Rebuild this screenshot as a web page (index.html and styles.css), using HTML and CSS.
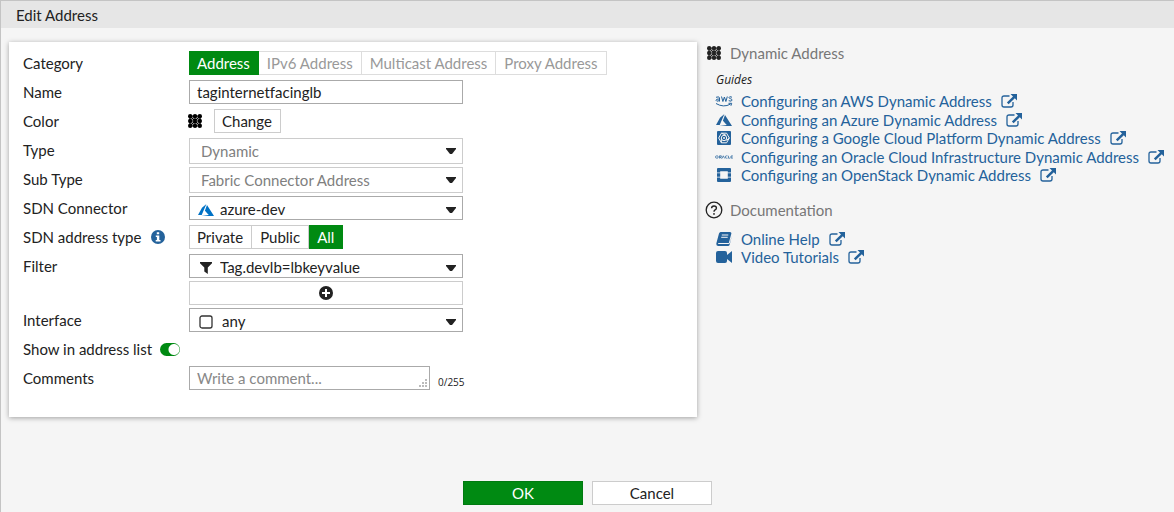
FILE: index.html
```html
<!DOCTYPE html>
<html lang="en">
<head>
<meta charset="utf-8">
<meta name="viewport" content="width=device-width, initial-scale=1">
<title>Edit Address</title>
<link rel="stylesheet" href="styles.css">
</head>
<body>
<svg class="sprite" aria-hidden="true">
  <symbol id="i-dots" viewBox="0 0 14 14">
    <path d="M2 2l10 10M12 2L2 12M7 2v10M2 7h10M2 2h10v10H2z" fill="none" stroke="currentColor" stroke-width="1.2"/>
    <g fill="currentColor"><circle cx="2.2" cy="2.2" r="2.2"/><circle cx="7" cy="2.2" r="2.2"/><circle cx="11.8" cy="2.2" r="2.2"/><circle cx="2.2" cy="7" r="2.2"/><circle cx="7" cy="7" r="1.6"/><circle cx="11.8" cy="7" r="2.2"/><circle cx="2.2" cy="11.8" r="2.2"/><circle cx="7" cy="11.8" r="2.2"/><circle cx="11.8" cy="11.8" r="2.2"/></g>
  </symbol>
  <symbol id="i-azure" viewBox="0 0 16 12">
    <path d="M8.4 0L4 3.8 0 11h3.7zM9 1L6.9 6.8l3.9 4.1L3.4 12H16z" fill="currentColor"/>
  </symbol>
  <symbol id="i-ext" viewBox="0 0 16 14">
    <path d="M8.5 2H3Q1 2 1 4v7q0 2 2 2h7q2 0 2-2V8" fill="none" stroke="currentColor" stroke-width="1.3"/>
    <path d="M9.5 0H16v6.5l-2.2-2.2L7.6 10.200 5.900 8.500l6.100-6.100z" fill="currentColor"/>
  </symbol>
</svg>
<div class="page">
  <header class="titlebar"><h1>Edit Address</h1></header>
  <main class="content">
    <form class="card" id="address-form">
      <div class="row">
        <span class="label" id="l-category">Category</span>
        <div class="segments" role="radiogroup" aria-labelledby="l-category">
          <label class="segment"><input type="radio" name="category" checked>Address</label>
          <label class="segment"><input type="radio" name="category" disabled>IPv6 Address</label>
          <label class="segment"><input type="radio" name="category" disabled>Multicast Address</label>
          <label class="segment"><input type="radio" name="category" disabled>Proxy Address</label>
        </div>
      </div>
      <div class="row">
        <label class="label" for="name">Name</label>
        <input class="text-input" id="name" type="text" value="taginternetfacinglb">
      </div>
      <div class="row">
        <span class="label">Color</span>
        <div class="color-field">
          <svg class="icon-dots black"><use href="#i-dots"/></svg>
          <button class="button change" type="button">Change</button>
        </div>
      </div>
      <div class="row">
        <label class="label" for="type">Type</label>
        <div class="select tall"><select id="type" disabled><option>Dynamic</option></select><svg class="caret" viewBox="0 0 10 6"><path d="M0 0h10v1L6 6H4L0 1z"/></svg></div>
      </div>
      <div class="row">
        <label class="label" for="subtype">Sub Type</label>
        <div class="select tall"><select id="subtype" disabled><option>Fabric Connector Address</option></select><svg class="caret" viewBox="0 0 10 6"><path d="M0 0h10v1L6 6H4L0 1z"/></svg></div>
      </div>
      <div class="row">
        <label class="label" for="sdn">SDN Connector</label>
        <div class="select"><svg class="lead azure"><use href="#i-azure"/></svg><select class="with-icon" id="sdn"><option>azure-dev</option></select><svg class="caret" viewBox="0 0 10 6"><path d="M0 0h10v1L6 6H4L0 1z"/></svg></div>
      </div>
      <div class="row">
        <span class="label with-info"><span id="l-sdntype">SDN address type</span>
          <svg class="info" viewBox="0 0 14 14"><circle cx="7" cy="7" r="7"/><path d="M5.800 2.300h2.400v2H5.800zM4.800 5.400h3.500v4.700h1.200v1.500H4.700v-1.500h1.200V6.900H4.800z" fill="#fff"/></svg>
        </span>
        <div class="segments" role="radiogroup" aria-labelledby="l-sdntype">
          <label class="segment"><input type="radio" name="sdntype">Private</label>
          <label class="segment"><input type="radio" name="sdntype">Public</label>
          <label class="segment"><input type="radio" name="sdntype" checked>All</label>
        </div>
      </div>
      <div class="row">
        <label class="label" for="filter">Filter</label>
        <div class="stack">
          <div class="select"><svg class="lead" viewBox="0 0 16 12"><path d="M2 0h12v1.200L9.800 5.500V12L6.300 9.500v-4L2 1.200z" fill="#222"/></svg><select class="with-icon" id="filter"><option>Tag.devlb=lbkeyvalue</option></select><svg class="caret" viewBox="0 0 10 6"><path d="M0 0h10v1L6 6H4L0 1z"/></svg></div>
          <button class="button add" type="button" aria-label="Add filter"><svg viewBox="0 0 14 14"><circle cx="7" cy="7" r="7" fill="#222"/><path d="M7 3v8M3 7h8" stroke="#fff" stroke-width="2"/></svg></button>
        </div>
      </div>
      <div class="row">
        <label class="label" for="interface">Interface</label>
        <div class="select"><svg class="lead square" viewBox="0 0 14 14"><rect x="1" y="1" width="12" height="12" rx="2" fill="none" stroke="#333" stroke-width="1.300"/></svg><select class="with-icon wide" id="interface"><option>any</option></select><svg class="caret" viewBox="0 0 10 6"><path d="M0 0h10v1L6 6H4L0 1z"/></svg></div>
      </div>
      <div class="row single">
        <label class="label" for="show">Show in address list</label>
        <input class="toggle" id="show" type="checkbox" checked>
      </div>
      <div class="row">
        <label class="label" for="comments">Comments</label>
        <div class="comment-field">
          <div class="comment-box">
            <textarea id="comments" rows="1" maxlength="255" placeholder="Write a comment..."></textarea>
            <svg class="grip" viewBox="0 0 8 8"><path d="M6 0h2v2H6zM3 3h2v2H3zM6 3h2v2H6zM0 6h2v2H0zM3 6h2v2H3zM6 6h2v2H6z" fill="#bbb"/></svg>
          </div>
          <span class="counter">0/255</span>
        </div>
      </div>
    </form>
    <aside class="help">
      <h2><svg class="icon-dots"><use href="#i-dots"/></svg>Dynamic Address</h2>
      <h3>Guides</h3>
      <ul class="links guides">
        <li><svg class="link-icon" viewBox="0 0 18 12"><g fill="none" stroke="currentColor" stroke-width="1"><path d="M1 2.300Q4.500 1 4.500 3v3.500M4.500 4Q1 3.700 1 5.300t3.500.3M6.500 1.500l1.400 5L9.400 2l1.500 4.500 1.400-5M17 2.200q-3-1.200-3 .3 0 .9 1.500 1.200t1.500 1.400q0 1.800-3.300.6"/><path d="M1 8.500q7.500 4.500 14.500.6M13.500 8.300h3.200l-.8 2.500"/></g></svg><a href="#">Configuring an AWS Dynamic Address<svg class="ext"><use href="#i-ext"/></svg></a></li>
        <li><svg class="link-icon azure-link"><use href="#i-azure"/></svg><a href="#">Configuring an Azure Dynamic Address<svg class="ext"><use href="#i-ext"/></svg></a></li>
        <li><svg class="link-icon" viewBox="0 0 14 14"><rect width="14" height="14" rx="1" fill="currentColor"/><g fill="none" stroke="#f5f5f5"><path d="M4.400 2.200h5.200L12.300 7l-2.700 4.800H4.400L1.700 7z"/><circle cx="7" cy="7" r="2.700"/><path d="M4.400 2.200l4.800 2.200M12.300 7l-3 2.400M4.400 11.800L4.300 7.500"/></g><circle cx="7" cy="7" r="1" fill="#f5f5f5"/></svg><a href="#">Configuring a Google Cloud Platform Dynamic Address<svg class="ext"><use href="#i-ext"/></svg></a></li>
        <li><svg class="link-icon" viewBox="0 0 18 4"><g fill="none" stroke="currentColor" stroke-width=".700"><rect x=".5" y=".8" width="2.800" height="2.400" rx="1.200"/><path d="M4.500 3.500V.8h1.800v1.400H4.800l1.800 1.200M7 3.500L8.300.8l1.400 2.700M12.500.8h-1q-1.200 0-1.200 1.200t1.200 1.200h1M13.500.8v2.400h1.800M17.800.8h-1.200q-.8 0-.8 1.200t.8 1.200h1.200M15.900 2h1.700"/></g></svg><a href="#">Configuring an Oracle Cloud Infrastructure Dynamic Address<svg class="ext"><use href="#i-ext"/></svg></a></li>
        <li><svg class="link-icon" viewBox="0 0 14 14"><path fill-rule="evenodd" d="M1 0h12q1 0 1 1v3.500h-3.200V3.300H3.200v1.200H0V1q0-1 1-1zM0 5.200h3.200v3.600H0zM10.800 5.200H14v3.600h-3.200zM0 9.500h3.200v1.200h7.600V9.500H14V13q0 1-1 1H1q-1 0-1-1z" fill="currentColor"/></svg><a href="#">Configuring an OpenStack Dynamic Address<svg class="ext"><use href="#i-ext"/></svg></a></li>
      </ul>
      <h2><svg class="question" viewBox="0 0 18 18"><circle cx="9" cy="9" r="7.800" fill="none" stroke="#222" stroke-width="1.300"/><path d="M6.600 7.200Q6.600 5 9 5t2.400 2q0 1.200-1.300 1.900Q9 9.500 9 10.800" fill="none" stroke="#222" stroke-width="1.400"/><circle cx="9" cy="12.900" r=".9" fill="#222"/></svg>Documentation</h2>
      <ul class="links docs">
        <li><svg class="link-icon" viewBox="0 0 16 14"><path d="M4.600 0H14q1.500.2 1.400 1.500L12.800 11H3q-1.200.2-1 1h10.500q1 0 1.300-1L16 3.500l-2.300 9q-.4 1.500-1.700 1.500H2Q0 13.800.3 11.500L3 1.500Q3.500.1 4.600 0z" fill="currentColor"/><path d="M5.800 3h6.500M5.200 5.300h6.500" stroke="#f5f5f5"/></svg><a href="#">Online Help<svg class="ext"><use href="#i-ext"/></svg></a></li>
        <li><svg class="link-icon camera" viewBox="0 0 16 12"><path d="M2 0h7q2 0 2 2v2l5-4v12l-5-4v2q0 2-2 2H2q-2 0-2-2V2q0-2 2-2z" fill="currentColor"/></svg><a href="#">Video Tutorials<svg class="ext"><use href="#i-ext"/></svg></a></li>
      </ul>
    </aside>
  </main>
  <footer class="actions">
    <button class="button primary" type="submit" form="address-form">OK</button>
    <button class="button" type="button">Cancel</button>
  </footer>
</div>
</body>
</html>
```
FILE: styles.css
```css
* { box-sizing: border-box; }
body {
  margin: 0;
  background: #f5f5f5;
  color: #222;
  font: 15px/24px Lato, "Liberation Sans", sans-serif;
}
button, input, select, textarea { font: inherit; color: inherit; margin: 0; }
h1, h2, h3, ul { margin: 0; padding: 0; font-weight: 400; font-size: 15px; }
svg { display: block; flex: none; }
.sprite { position: absolute; width: 0; height: 0; }

.page {
  display: flex;
  flex-direction: column;
  min-height: 100vh;
  border-left: 1px solid #c4c4c4;
  border-top: 1px solid #c4c4c4;
}
.titlebar { padding: 2px 15px 1px; background: #e6e6e6; }
.content {
  display: grid;
  grid-template-columns: minmax(0, 1fr) 460px;
  gap: 9px;
  align-items: start;
  padding: 14px 8px;
}
.card {
  padding: 9px 15px 22px 14px;
  background: #fff;
  box-shadow: 0 1px 5px rgba(0, 0, 0, .35);
}

.row {
  display: grid;
  grid-template-columns: 166px minmax(0, 1fr);
  align-items: start;
  min-height: 29px;
}
.row.single { display: flex; gap: 8px; }
.with-info { display: flex; align-items: center; gap: 10px; }
.info { width: 14px; height: 14px; fill: #24629b; }

.segments { display: flex; }
.segment {
  position: relative;
  height: 24px;
  padding: 0 8px;
  border: 1px solid #ccc;
  line-height: 22px;
  white-space: nowrap;
}
.segment:first-child { padding-left: 7px; }
.segment + .segment { border-left: 0; }
.segment input { position: absolute; inset: 0; opacity: 0; }
.segment:has(:disabled) { border-color: #ddd; color: #999; }
.segment:has(:checked) { border-color: #008a12; background: #008a12; color: #fff; }

.text-input {
  width: 274px;
  height: 24px;
  padding: 0 7px;
  border: 1px solid #aaa;
  background: #fff;
  font-variant-ligatures: none;
}
.color-field { display: flex; align-items: center; gap: 12px; }
.icon-dots { width: 14px; height: 14px; }
.icon-dots.black { color: #000; margin-left: -1px; }
.button {
  height: 24px;
  padding: 0 7px;
  border: 1px solid #ccc;
  background: #fff;
  line-height: 22px;
}
.change { padding: 0 8px 0 7px; }

.select {
  display: grid;
  align-items: center;
  width: 274px;
  height: 24px;
  border: 1px solid #aaa;
  background: #fff;
}
.select > * { grid-area: 1 / 1; }
.select.tall { height: 26px; border-color: #ccc; }
.select select {
  width: 100%;
  height: 100%;
  padding: 0 24px 0 11px;
  border: 0;
  background: transparent;
  appearance: none;
  opacity: 1;
}
.select select:disabled { color: #808080; }
.select .with-icon { padding-left: 30px; padding-bottom: 2px; }
.select .wide { padding-left: 32px; }
.lead { width: 16px; height: 12px; margin-left: 8px; }
.lead.azure { color: #0072c6; }
.lead.square { width: 14px; height: 14px; margin-left: 9px; }
.caret { width: 10px; height: 6px; margin-right: 6px; justify-self: end; fill: #222; pointer-events: none; }

.stack { display: grid; gap: 3px; padding-bottom: 3px; }
.add { display: grid; place-items: center; width: 274px; }
.add svg { width: 14px; height: 14px; }

.toggle {
  appearance: none;
  width: 20px;
  height: 13px;
  margin-top: 6px;
  border-radius: 7px;
  background: radial-gradient(circle at 14px 50%, #fff 5px, transparent 6px) #aaa;
}
.toggle:checked { background-color: #008a12; }

.comment-field { display: flex; gap: 8px; }
.comment-box { position: relative; width: 241px; height: 24px; }
.comment-box textarea {
  display: block;
  width: 100%;
  height: 24px;
  padding: 0 7px;
  border: 1px solid #aaa;
  line-height: 22px;
  resize: none;
  overflow: hidden;
}
textarea::placeholder { color: #888; }
.grip { position: absolute; right: 3px; bottom: 3px; width: 8px; height: 8px; }
.counter { padding-top: 4px; font: 10px/24px "Open Sans", sans-serif; }

.help h2 { display: flex; align-items: center; gap: 10px; color: #777; }
.help .icon-dots { margin-left: 1px; color: #222; }
.help h2:first-child { gap: 9px; line-height: 22px; }
.help h3 { padding: 4px 0 0 10px; font: italic 12px/23px "Open Sans", sans-serif; }
.question { width: 18px; height: 18px; margin: 0 -3px 0 -1px; }
.links { list-style: none; color: #24629b; }
.links li {
  display: grid;
  grid-template-columns: 18px 1fr;
  column-gap: 8px;
  align-items: center;
  height: 18px;
  padding-left: 9px;
}
.guides li:nth-child(even) { height: 19px; }
.guides { padding: 1px 0 14px; }
.docs { padding-top: 8px; }
.links a { display: flex; align-items: center; gap: 9px; color: inherit; line-height: 18px; text-decoration: none; white-space: nowrap; }
.link-icon { width: 18px; height: 14px; }
.link-icon.azure-link { width: 16px; height: 12px; margin-left: 1px; }
.link-icon.camera { width: 16px; height: 12px; margin-left: 1px; }
.ext { width: 16px; height: 14px; }

.actions {
  display: flex;
  justify-content: center;
  gap: 9px;
  margin-top: auto;
  padding-bottom: 7px;
}
.actions .button { width: 120px; }
.button.primary { border-color: #007a10; background: #008a12; color: #fff; }
```
